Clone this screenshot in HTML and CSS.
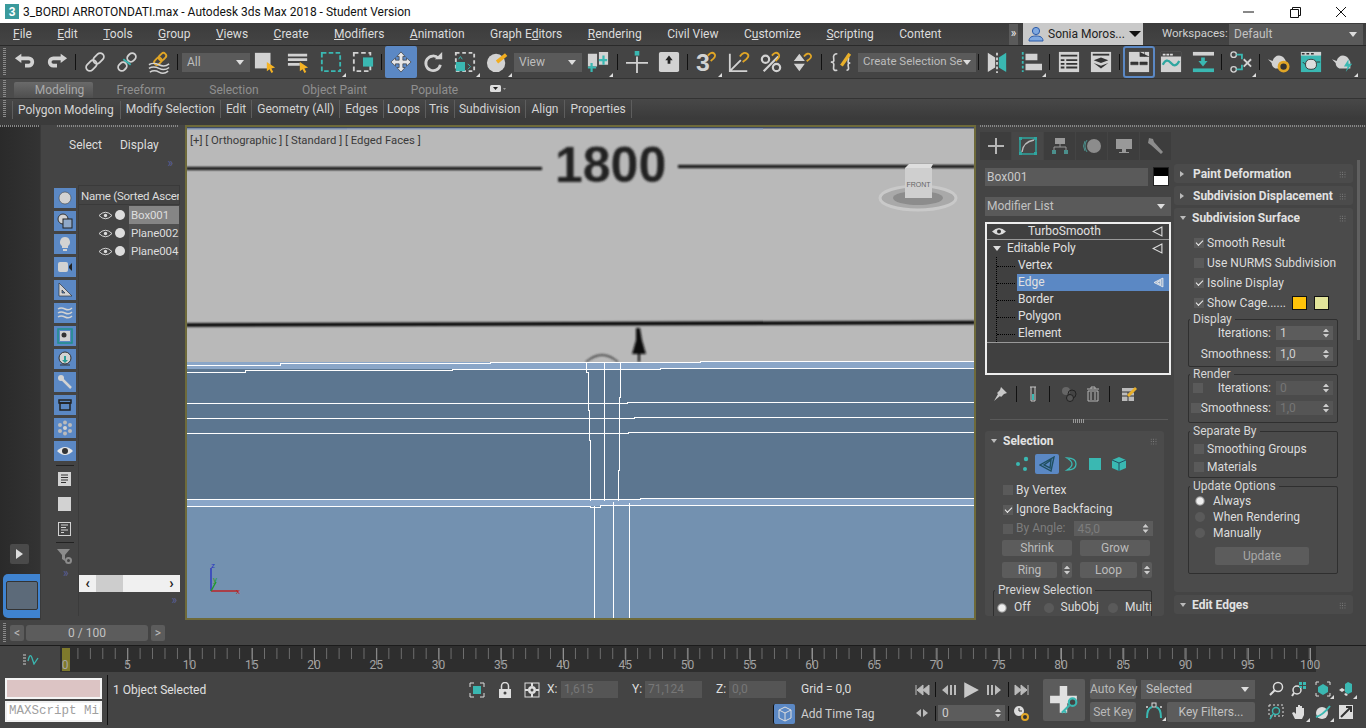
FILE: index.html
```html
<!DOCTYPE html>
<html lang="en">
<head>
<meta charset="utf-8">
<title>3ds Max</title>
<link rel="stylesheet" href="styles.css">
</head>
<body>
<div class="app">

<header class="titlebar">
  <svg class="appicon" viewBox="0 0 14 16"><rect width="14" height="15" fill="#3a9a9c"/><text x="7" y="12" class="appicon-t">3</text></svg>
  <span class="title">3_BORDI ARROTONDATI.max - Autodesk 3ds Max 2018 - Student Version</span>
  <div class="winbtns">
    <svg class="wb" viewBox="0 0 46 22"><path d="M17 11h11" stroke="#111" fill="none"/></svg>
    <svg class="wb" viewBox="0 0 46 22"><path d="M18.500 8.500h8v8h-8zM20.500 8.500v-2h8v8h-2" stroke="#111" fill="none"/></svg>
    <svg class="wb" viewBox="0 0 46 22"><path d="M18 6l10 10M28 6L18 16" stroke="#111" fill="none"/></svg>
  </div>
</header>

<nav class="menubar">
  <div class="menus">
    <span><u>F</u>ile</span><span><u>E</u>dit</span><span><u>T</u>ools</span><span><u>G</u>roup</span><span><u>V</u>iews</span><span><u>C</u>reate</span><span><u>M</u>odifiers</span><span><u>A</u>nimation</span><span>Graph E<u>d</u>itors</span><span><u>R</u>endering</span><span>Civil View</span><span>C<u>u</u>stomize</span><span><u>S</u>cripting</span><span>Content</span>
  </div>
  <div class="menu-right">
    <span class="chev">&raquo;</span>
    <div class="user">
      <svg class="s16" viewBox="0 0 16 16"><circle cx="8" cy="5" r="3.600" fill="#7fa8e0" stroke="#2a5aa8"/><path d="M1 15c0-4 3-5 7-5s7 1 7 5z" fill="#7fa8e0" stroke="#2a5aa8"/></svg>
      <span>Sonia Moros...</span><i class="tri-d dark"></i>
    </div>
    <span class="ws-label">Workspaces:</span>
    <div class="dd ws"><span>Default</span><i class="tri-d"></i></div>
  </div>
</nav>

<div class="toolbar">
  <span class="grip"></span>
  <button class="tb"><svg class="i" viewBox="0 0 24 24"><path fill="#d2d2d2" d="M1 8l7-5v3h8a6 6 0 0 1 0 12h-4v-4h4a2 2 0 0 0 0-4H8v3z"/></svg></button>
  <button class="tb"><svg class="i" viewBox="0 0 24 24"><path fill="#d2d2d2" d="M23 8l-7-5v3H8a6 6 0 0 0 0 12h4v-4H8a2 2 0 0 1 0-4h8v3z"/></svg></button>
  <i class="sep"></i>
  <button class="tb"><svg class="i" viewBox="0 0 24 24"><g transform="rotate(-45 12 12)" fill="none" stroke="#d2d2d2" stroke-width="2"><rect x="0" y="8" width="13" height="8" rx="4"/><rect x="11" y="8" width="13" height="8" rx="4"/></g></svg></button>
  <button class="tb"><svg class="i" viewBox="0 0 24 24"><g transform="rotate(-45 12 12)" fill="none" stroke="#d2d2d2" stroke-width="2"><rect x="0" y="8" width="10" height="8" rx="4"/><rect x="14" y="8" width="10" height="8" rx="4"/></g><path d="M8 9l8 6" stroke="#3ab8b2" stroke-width="2"/></svg></button>
  <button class="tb"><svg class="i" viewBox="0 0 24 24"><g transform="rotate(-45 14 8)" fill="none" stroke="#e0a526" stroke-width="2"><rect x="5" y="5" width="9" height="6" rx="3"/><rect x="12" y="5" width="9" height="6" rx="3"/></g><path d="M1 15q5-3 11 0t11-1M1 19q5-3 11 0t11-1M2 23q5-3 10 0t10-1" stroke="#d2d2d2" fill="none" stroke-width="1.600"/></svg></button>
  <i class="sep"></i>
  <div class="dd all"><span>All</span><i class="tri-d"></i></div>
  <button class="tb"><svg class="i" viewBox="0 0 24 24"><rect x="1" y="2" width="17" height="17" fill="#d2d2d2"/><path d="M14 12l9 6-4 1 2 4-2 1-2-4-3 2z" fill="#f5b324"/></svg></button>
  <button class="tb ml1"><svg class="i" viewBox="0 0 24 24"><path d="M1 3h21v3H1zM1 8h21v3H1zM1 13h13v3H1z" fill="#d2d2d2"/><path d="M14 12l9 6-4 1 2 4-2 1-2-4-3 2z" fill="#f5b324"/></svg></button>
  <button class="tb fly ml1"><svg class="i" viewBox="0 0 24 24"><rect x="2" y="2" width="20" height="20" fill="none" stroke="#3ab8b2" stroke-width="2" stroke-dasharray="5 2.500"/></svg></button>
  <button class="tb"><svg class="i" viewBox="0 0 24 24"><rect x="2" y="2" width="18" height="20" fill="none" stroke="#d2d2d2" stroke-width="2" stroke-dasharray="5 3"/><rect x="12" y="7" width="11" height="10" fill="#3ab8b2"/></svg></button>
  <i class="sep"></i>
  <button class="tb on"><svg class="i" viewBox="0 0 24 24"><path fill="#e6e6e6" stroke="#333" stroke-width=".7" d="M12 1l4.500 5H14v4h4V7.500l5 4.500-5 4.500V14h-4v4h2.500L12 23l-4.500-5H10v-4H6v2.500L1 12l5-4.500V10h4V6H7.500z"/></svg></button>
  <button class="tb"><svg class="i" viewBox="0 0 24 24"><path d="M18 8a8 8 0 1 0 2 7" fill="none" stroke="#d2d2d2" stroke-width="3"/><path d="M14 9h8V1z" fill="#d2d2d2"/></svg></button>
  <button class="tb fly"><svg class="i" viewBox="0 0 24 24"><rect x="2" y="2" width="20" height="20" fill="none" stroke="#d2d2d2" stroke-width="2" stroke-dasharray="4 3"/><rect x="2" y="12" width="10" height="10" fill="#3ab8b2"/><path d="M5 9l2-3 2 3" fill="none" stroke="#3ab8b2"/><path d="M15 14l3 3-3 3" fill="none" stroke="#3ab8b2"/></svg></button>
  <button class="tb fly"><svg class="i" viewBox="0 0 24 24"><circle cx="11" cy="13" r="10" fill="#d2d2d2"/><path d="M12 12L22 4" stroke="#f2ad1f" stroke-width="4"/></svg></button>
  <div class="dd view"><span>View</span><i class="tri-d"></i></div>
  <button class="tb fly"><svg class="i" viewBox="0 0 24 24"><path d="M1 3h10v14H1zM13 1h10v14H13z" fill="#d2d2d2"/><path d="M5 13v10M1 18h9M18 5v10M13 10h9" stroke="#3ab8b2" stroke-width="2.400"/></svg></button>
  <i class="sep ml1"></i>
  <button class="tb"><svg class="i" viewBox="0 0 24 24"><path d="M12 6v18M0 13h24" stroke="#d2d2d2" stroke-width="2"/><rect x="9.500" y="0" width="5" height="5" fill="#3ab8b2"/></svg></button>
  <button class="tb"><svg class="i" viewBox="0 0 24 24"><rect x="1" y="1" width="22" height="22" rx="2" fill="#d2d2d2"/><path d="M12 5l4 5h-2.500v4h-3v-4H8z" fill="#222"/></svg></button>
  <i class="sep"></i>
  <button class="tb fly"><svg class="i" viewBox="0 0 24 24"><text x="0" y="22" class="glyph">3</text><path d="M13 5q4-5 7-2t-4 8" fill="none" stroke="#e0a526" stroke-width="2"/></svg></button>
  <button class="tb"><svg class="i" viewBox="0 0 24 24"><path d="M2 3v19h19M2 22l12-12" fill="none" stroke="#d2d2d2" stroke-width="2"/><path d="M13 6q4-6 8-3t-5 9" fill="none" stroke="#e0a526" stroke-width="2"/></svg></button>
  <button class="tb"><svg class="i" viewBox="0 0 24 24"><circle cx="6" cy="9" r="4" fill="none" stroke="#d2d2d2" stroke-width="2.400"/><circle cx="18" cy="18" r="4" fill="none" stroke="#d2d2d2" stroke-width="2.400"/><path d="M4 22L20 6" stroke="#d2d2d2" stroke-width="2.400"/><path d="M13 5q4-5 7-2t-3 8" fill="none" stroke="#e0a526" stroke-width="2"/></svg></button>
  <button class="tb"><svg class="i" viewBox="0 0 24 24"><path d="M2 11l6-8 6 8zM2 14h12l-6 8z" fill="#d2d2d2"/><path d="M13 6q4-5 7-2t-4 7" fill="none" stroke="#e0a526" stroke-width="2"/></svg></button>
  <i class="sep"></i>
  <button class="tb"><svg class="i" viewBox="0 0 24 24"><path d="M8 3Q3 3 4 8t-3 4q4 0 3 5t4 4M18 6q3 0 2 4t2 3q-3 0-2 4t-2 4" fill="none" stroke="#d2d2d2" stroke-width="1.800"/><path d="M11 15L20 2l3 2-9 13z" fill="#e9b02a"/></svg></button>
  <div class="dd csel"><span>Create Selection Se</span><i class="tri-d"></i></div>
  <i class="sep"></i>
  <button class="tb mirror"><svg class="i" viewBox="0 0 24 24"><path d="M2 2l8 5v11l-8 5z" fill="#d2d2d2"/><path d="M12 2v22" stroke="#d2d2d2" stroke-dasharray="3 2" stroke-width="2"/><path d="M22 2l-8 5v11l8 5z" fill="#3ab8b2"/></svg></button>
  <button class="tb fly ml2"><svg class="i" viewBox="0 0 24 24"><path d="M3 1v22" stroke="#3ab8b2" stroke-width="2" stroke-dasharray="3 2"/><path d="M6 3h13v7H6zM6 14h18v7H6z" fill="#d2d2d2"/></svg></button>
  <i class="sep"></i>
  <button class="tb"><svg class="i" viewBox="0 0 24 24"><rect x="1" y="1" width="22" height="22" fill="#d2d2d2"/><path d="M3 4h18v2H3zM3 9h4v2H3zM9 9h12v2H9zM3 13h4v2H3zM9 13h12v2H9zM3 17h4v2H3zM9 17h12v2H9z" fill="#333"/></svg></button>
  <button class="tb"><svg class="i" viewBox="0 0 24 24"><rect x="1" y="1" width="22" height="22" fill="#d2d2d2"/><path d="M3 3h18v2H3z" fill="#333"/><path d="M12 7l8 3-8 3-8-3zM4 13l8 3 8-3-8 6z" fill="#333"/></svg></button>
  <i class="sep"></i>
  <button class="tb onl"><svg class="i" viewBox="0 0 24 24"><rect x="1" y="1" width="22" height="22" fill="#d2d2d2"/><path d="M13 1v5h10M18 1v5M3 12h8v3H3zM13 12h8v3h-8z" stroke="#333" fill="#333" stroke-width=".6"/></svg></button>
  <button class="tb"><svg class="i" viewBox="0 0 24 24"><rect x="1" y="1" width="22" height="22" fill="#d2d2d2"/><path d="M1 1h22v5H1z" fill="#444"/><path d="M3 3h3v2H3zM7 3h3v2H7zM11 3h3v2h-3z" fill="#ddd"/><path d="M3 15q4-8 9-2t9-2" stroke="#2fa6a0" stroke-width="2.500" fill="none"/></svg></button>
  <button class="tb"><svg class="i" viewBox="0 0 24 24"><path d="M1 1h23v4H1z" fill="#d2d2d2"/><path d="M1 19h23v4H1z" fill="#3ab8b2"/><path d="M10 7h4v4h3l-5 6-5-6h3z" fill="#3ab8b2"/></svg></button>
  <i class="sep"></i>
  <button class="tb fly"><svg class="i" viewBox="0 0 24 24"><circle cx="4" cy="4" r="3" fill="none" stroke="#d2d2d2" stroke-width="1.500"/><circle cx="4" cy="20" r="3" fill="none" stroke="#d2d2d2" stroke-width="1.500"/><path d="M7 4h6v5M7 20h6v-5" stroke="#3ab8b2" stroke-width="2" fill="none"/><path d="M15 9l8 8M23 9l-8 8" stroke="#d2d2d2" stroke-width="2"/></svg></button>
  <i class="sep"></i>
  <button class="tb"><svg class="i" viewBox="0 0 24 24"><path d="M0 9l5 2q2-6 7-6t8 7v7H8q-4-2-4-6z" fill="#d2d2d2"/><circle cx="17" cy="17" r="5" fill="#333" stroke="#e0a526" stroke-width="3"/></svg></button>
  <button class="tb"><svg class="i" viewBox="0 0 24 24"><rect x="1" y="1" width="22" height="22" fill="#3ab8b2"/><path d="M1 1h22v4H1z" fill="#d2d2d2"/><path d="M2 3h3M7 3h3M12 3h3" stroke="#333" stroke-width="1.500"/><path d="M6 15q0-6 6-6t6 6q0 5-6 5t-6-5zM3 12l3 3M18 12h4" fill="#ddd" stroke="#333"/></svg></button>
  <button class="tb fly"><svg class="i" viewBox="0 0 24 24"><path d="M0 9l5 2q2-6 7-6t8 7v7H8q-4-2-4-6z" fill="#d2d2d2"/><path d="M18 9l-5 8h4l-2 6 7-9h-4z" fill="#3ab8b2"/></svg></button>
</div>

<div class="ribbon-tabs">
  <span class="grip short"></span>
  <span class="rtab active">Modeling</span><span class="rtab w92 s2">Freeform</span><span class="rtab w92 s1">Selection</span><span class="rtab w109">Object Paint</span><span class="rtab w85 s3">Populate</span>
  <svg class="rdrop" viewBox="0 0 16 8"><rect x="0" y="0" width="11" height="7" rx="1.500" fill="#ddd"/><path d="M3 2h5L5.500 5z" fill="#222"/><path d="M13 3h3l-1.500 2z" fill="#999"/></svg>
</div>

<div class="ribbon-panels">
  <span class="grip short"></span>
  <span class="rp first">Polygon Modeling</span><span class="rp">Modify Selection</span><span class="rp">Edit</span><span class="rp">Geometry (All)</span><span class="rp">Edges</span><span class="rp t2">Loops</span><span class="rp t2">Tris</span><span class="rp t1">Subdivision</span><span class="rp">Align</span><span class="rp p1">Properties</span>
</div>
<div class="dotted-strip"></div>

<main class="main">
  <aside class="dock">
    <button class="playbtn"><i class="tri-r"></i></button>
    <div class="vpthumb"><div class="vpthumb-in"></div></div>
  </aside>

  <aside class="explorer">
    <div class="ex-tabs"><span>Select</span><span>Display</span></div>
    <div class="ex-more top">&raquo;</div>
    <div class="ex-body">
      <div class="ex-icons">
        <span class="fb"><svg class="s16" viewBox="0 0 16 16"><circle cx="8" cy="8" r="6" fill="#d2d2d2" stroke="#444" stroke-width=".6"/></svg></span>
        <span class="fb"><svg class="s16" viewBox="0 0 16 16"><circle cx="6" cy="6" r="5" fill="#d2d2d2" stroke="#333"/><rect x="6" y="6" width="9" height="9" fill="#8fa8c8" stroke="#222"/></svg></span>
        <span class="fb"><svg class="s16" viewBox="0 0 16 16"><path d="M8 1a5 5 0 0 1 3 9v2H5v-2a5 5 0 0 1 3-9zM6 13h4v2H6z" fill="#d2d2d2"/></svg></span>
        <span class="fb"><svg class="s16" viewBox="0 0 16 16"><rect x="1" y="3" width="10" height="10" rx="2" fill="#d2d2d2"/><path d="M12 7l3-3v8l-3-3z" fill="#222"/></svg></span>
        <span class="fb"><svg class="s16" viewBox="0 0 16 16"><path d="M2 1l13 13H2zM5 8v3h3z" fill="#d2d2d2" stroke="#222" stroke-width=".6" fill-rule="evenodd"/></svg></span>
        <span class="fb"><svg class="s16" viewBox="0 0 16 16"><path d="M1 4q3-2 7 0t7-1M1 8q3-2 7 0t7-1M1 12q3-2 7 0t7-1" stroke="#d2d2d2" stroke-width="1.500" fill="none"/></svg></span>
        <span class="fb"><svg class="s16" viewBox="0 0 16 16"><rect x="1" y="1" width="14" height="14" fill="none" stroke="#1f8f8a" stroke-width="1.500"/><rect x="3" y="3" width="10" height="10" fill="#d2d2d2"/><circle cx="7" cy="7" r="2.500" fill="#333"/></svg></span>
        <span class="fb"><svg class="s16" viewBox="0 0 16 16"><circle cx="8" cy="7" r="6" fill="#d2d2d2" stroke="#333"/><path d="M7 5h2v4h2l-3 3-3-3h2z" fill="#2a9c96"/><path d="M3 14h10" stroke="#333"/></svg></span>
        <span class="fb"><svg class="s16" viewBox="0 0 16 16"><circle cx="4" cy="4" r="3" fill="#d2d2d2"/><path d="M5 5l9 9" stroke="#d2d2d2" stroke-width="2.500"/></svg></span>
        <span class="fb"><svg class="s16" viewBox="0 0 16 16"><path d="M2 3h12v3H2z" fill="none" stroke="#222" stroke-width="1.500"/><path d="M3 6h10v7H3z" fill="none" stroke="#222" stroke-width="1.500"/></svg></span>
        <span class="fb"><svg class="s16" viewBox="0 0 16 16"><circle cx="8" cy="8" r="2" fill="#d2d2d2"/><g fill="#bbb"><circle cx="8" cy="2.500" r="2"/><circle cx="8" cy="13.500" r="2"/><circle cx="3" cy="5" r="2"/><circle cx="13" cy="5" r="2"/><circle cx="3" cy="11" r="2"/><circle cx="13" cy="11" r="2"/></g></svg></span>
        <span class="fb"><svg class="s16" viewBox="0 0 16 16"><path d="M0 8q8-8 16 0q-8 8-16 0z" fill="#e6e6e6"/><circle cx="8" cy="8" r="3" fill="#333"/></svg></span>
        <i class="ex-div"></i>
        <svg class="ex-small" viewBox="0 0 14 14"><rect width="13" height="14" fill="#d2d2d2"/><path d="M3 3h7M3 5.500h7M3 8h7M3 10.500h5" stroke="#333"/></svg>
        <svg class="ex-small" viewBox="0 0 14 14"><rect width="13" height="14" fill="#d2d2d2"/></svg>
        <svg class="ex-small" viewBox="0 0 14 14"><rect x=".5" y=".5" width="12" height="13" fill="none" stroke="#d2d2d2"/><path d="M3 3h7M3 5.500h5M3 8h7M3 10.500h3" stroke="#d2d2d2"/></svg>
        <i class="ex-div"></i>
        <svg class="ex-filter" viewBox="0 0 16 16"><path d="M0 0h13L8 6v6L5 10V6z" fill="#8c8c8c"/><circle cx="11.500" cy="11.500" r="2.500" fill="none" stroke="#8c8c8c" stroke-width="2"/></svg>
      </div>
      <div class="ex-list">
        <div class="ex-head">Name (Sorted Ascen</div>
        <div class="ex-tree">
          <div class="ex-row"><svg class="eye" viewBox="0 0 14 9"><path d="M0 4.500q7-7 14 0q-7 7-14 0z" fill="none" stroke="#ddd"/><circle cx="7" cy="4.500" r="1.800" fill="#ddd"/></svg><i class="dot"></i><span class="cell sel">Box001</span></div>
          <div class="ex-row"><svg class="eye" viewBox="0 0 14 9"><path d="M0 4.500q7-7 14 0q-7 7-14 0z" fill="none" stroke="#ddd"/><circle cx="7" cy="4.500" r="1.800" fill="#ddd"/></svg><i class="dot"></i><span class="cell">Plane002</span></div>
          <div class="ex-row"><svg class="eye" viewBox="0 0 14 9"><path d="M0 4.500q7-7 14 0q-7 7-14 0z" fill="none" stroke="#ddd"/><circle cx="7" cy="4.500" r="1.800" fill="#ddd"/></svg><i class="dot"></i><span class="cell">Plane004</span></div>
        </div>
        <div class="hscroll"><i class="ar">&lsaquo;</i><span class="thumb"></span><i class="ar">&rsaquo;</i></div>
      </div>
    </div>
    <div class="ex-more m1">&raquo;</div>
    <div class="ex-more m2b">&raquo;</div>
  </aside>

  <section class="viewport">
    <svg class="scene" viewBox="187 127 787 491" preserveAspectRatio="none">
      <defs><filter id="soft"><feGaussianBlur stdDeviation=".8"/></filter></defs>
      <rect x="187" y="127" width="787" height="491" fill="#b9b9b9"/>
      <rect x="187" y="127" width="787" height="1.500" fill="#3c4a66"/>
      <rect x="187" y="128.500" width="160" height="1" fill="#7c95c0"/>
      <rect x="347" y="128.500" width="416" height="1" fill="#8aa0c6"/>
      <g filter="url(#soft)">
        <path d="M186 168.500H542" stroke="#0d0d0d" stroke-width="2.800"/>
        <path d="M678 166.500H975" stroke="#0d0d0d" stroke-width="2.800"/>
        <text x="555" y="182" class="dim">1800</text>
        <path d="M186 325L975 322.500" stroke="#000" stroke-width="3.600"/>
        <path d="M636 328h4l2 12 4 14h-6v8h-2v-8h-6l4-14z" fill="#111"/>
        <path d="M586 362q16-14 32 0" fill="none" stroke="#333" stroke-width="1.500"/>
      </g>
      <rect x="187" y="362" width="787" height="8" fill="#8aa6c8"/>
      <rect x="187" y="369" width="787" height="130" fill="#5c7690"/>
      <rect x="187" y="499" width="787" height="7" fill="#8aa6c8"/>
      <rect x="187" y="506" width="787" height="112" fill="#7391b0"/>
      <g stroke="#fff" fill="none" stroke-width="1" class="crisp">
        <path d="M187 365.500H280V363.500H490V362.500H700V361.500H975"/>
        <path d="M187 372.500H245V370.500H452V369.500H660V368.500H975"/>
        <path d="M187 403.500H627V402.500H975"/>
        <path d="M187 418.500H634V417.500H975"/>
        <path d="M187 433.500H628V432.500H975"/>
        <path d="M187 499.500H640V498.500H975"/>
        <path d="M187 506.500H590V507.500H600V505.500H975"/>
        <path d="M586.500 362V372H588.500V410H589.500V440H590.500V501"/>
        <path d="M604.500 362V501"/>
        <path d="M620.500 362V397H619.500V470H618.500V501"/>
        <path d="M594.500 506V618"/>
        <path d="M613.500 502V618"/>
        <path d="M629.500 503V618"/>
      </g>
      <g class="cube">
        <ellipse cx="918" cy="198" rx="38" ry="12" fill="#a9a9a9" stroke="#c9c9c9" stroke-width="3"/>
        <ellipse cx="918" cy="198" rx="25" ry="7" fill="#8c8c8c"/>
        <path d="M905 168l4-4h24l-2 4z" fill="#dedede"/>
        <rect x="905" y="168" width="27" height="30" fill="#cfcfcf"/>
        <text x="918.500" y="187" class="cube-t">FRONT</text>
      </g>
      <g stroke-width="1.400" fill="none">
        <path d="M211 591V568" stroke="#2a36c0"/>
        <path d="M211 591H238" stroke="#c01c1c"/>
        <path d="M211 591L216 582" stroke="#1f9a2a"/>
      </g>
      <text x="211" y="568" class="ax z">z</text>
      <text x="236" y="594" class="ax x">x</text>
      <text x="213" y="582" class="ax y">y</text>
    </svg>
    <div class="vplabel">[+] [ Orthographic ] [ Standard ] [ Edged Faces ]</div>
  </section>

  <aside class="cmd">
    <div class="cmd-left">
      <div class="cmd-tabs">
        <span class="ct"><svg class="s20" viewBox="0 0 20 20"><path d="M10 2v16M2 10h16" stroke="#b5b5b5" stroke-width="2"/></svg></span>
        <span class="ct act"><svg class="s20" viewBox="0 0 20 20"><rect x="2" y="2" width="16" height="16" fill="none" stroke="#2fa6a0" stroke-width="1.500"/><path d="M4 16q1-10 12-12" fill="none" stroke="#bbb" stroke-width="1.500"/><path d="M1 1h3v3H1zM16 1h3v3h-3zM1 16h3v3H1zM16 16h3v3h-3z" fill="#2fa6a0"/></svg></span>
        <span class="ct"><svg class="s20" viewBox="0 0 20 20"><path d="M5 2h10v6H5z" fill="#999"/><path d="M10 8v3M4 15v-4h12v4" stroke="#999" fill="none"/><path d="M2 14h4v4H2zM14 14h4v4h-4z" fill="#4b8f8c"/></svg></span>
        <span class="ct"><svg class="s20" viewBox="0 0 20 20"><circle cx="12" cy="10" r="7" fill="#8c8c8c"/><path d="M5 4q-4 6 0 12M3 5q-3 5 0 10" stroke="#4b8f8c" fill="none"/></svg></span>
        <span class="ct"><svg class="s20" viewBox="0 0 20 20"><path d="M2 3h16v10H2zM8 13h4v3h3v1H5v-1h3z" fill="#999"/></svg></span>
        <span class="ct"><svg class="s20" viewBox="0 0 20 20"><path d="M3 2l4 1 1 3 9 10-2 2L5 9 2 7z" fill="#8c8c8c"/></svg></span>
      </div>
      <div class="name-row"><div class="field">Box001</div><div class="swatch"></div></div>
      <div class="dd modlist"><span>Modifier List</span><i class="tri-d"></i></div>
      <div class="stack">
        <div class="st-row st-top"><svg class="eye2" viewBox="0 0 14 9"><path d="M0 4.500q7-7 14 0q-7 7-14 0z" fill="#ddd"/><circle cx="7" cy="4.500" r="2" fill="#333"/></svg><span class="st-turbo">TurboSmooth</span><svg class="lit" viewBox="0 0 10 10"><path d="M9 1L1 5l8 4z" fill="none" stroke="#ddd"/></svg></div>
        <div class="st-row"><i class="tri-d expand"></i><span class="st-name">Editable Poly</span><svg class="lit" viewBox="0 0 10 10"><path d="M9 1L1 5l8 4z" fill="none" stroke="#ddd"/></svg></div>
        <div class="st-tree">
          <div class="st-sub"><span>Vertex</span></div>
          <div class="st-sub cur"><span>Edge</span><svg class="lit" viewBox="0 0 10 10"><path d="M9 1L1 5l8 4zM7 3L3.500 5 7 7z" fill="#8fa8c8" stroke="#eee" stroke-width=".8"/></svg></div>
          <div class="st-sub"><span>Border</span></div>
          <div class="st-sub"><span>Polygon</span></div>
          <div class="st-sub"><span>Element</span></div>
        </div>
        <div class="st-end"></div>
      </div>
      <div class="stack-tools">
        <svg class="s16" viewBox="0 0 16 16"><path d="M9 1l6 6-3 1-3 3-1-1-6 5 4-7-1-1 3-3z" fill="#c8c8c8"/></svg>
        <i class="sep"></i>
        <svg class="s16" viewBox="0 0 16 16"><path d="M5 1h6M6 1v14h4V1" stroke="#c8c8c8" fill="none"/><rect x="7" y="8" width="2" height="6" fill="#3ab8b2"/></svg>
        <i class="sep"></i>
        <svg class="s16 nudge3" viewBox="0 0 16 16"><circle cx="5" cy="5" r="4" fill="#666"/><circle cx="11" cy="8" r="4" fill="none" stroke="#222"/><circle cx="9" cy="12" r="3.500" fill="#555" stroke="#222"/></svg>
        <svg class="s16 nudge8" viewBox="0 0 16 16"><path d="M2 3h12M6 3V1h4v2M3 5h10v10H3zM6 6v8M10 6v8" stroke="#b5b5b5" fill="none"/></svg>
        <i class="sep"></i>
        <svg class="s16 nudge3" viewBox="0 0 16 16"><rect x="1" y="2" width="12" height="13" fill="#bbb"/><path d="M1 6h12M7 6v9M1 10h12" stroke="#333"/><path d="M6 9l8-8 2 2-8 8z" fill="#e9b02a"/></svg>
      </div>
      <div class="divider"><i></i></div>

      <div class="roll sel-roll">
        <div class="roll-h"><i class="tri-d small"></i><b>Selection</b><span class="dots"></span></div>
        <div class="sub-icons">
          <span class="so"><svg class="s16" viewBox="0 0 16 16"><g fill="#3ab8b2"><circle cx="3" cy="8" r="2"/><circle cx="11" cy="3" r="2.200"/><circle cx="10" cy="13" r="2"/></g></svg></span>
          <span class="so on"><svg class="s16" viewBox="0 0 16 16"><path d="M15 1L1 9l11 6zM12 4L5 9l6 3z" fill="none" stroke="#1f4f60" stroke-width="1.400"/></svg></span>
          <span class="so"><svg class="s16" viewBox="0 0 16 16"><path d="M4 2q9 0 9 6t-9 6q5-3 5-6t-5-6z" fill="none" stroke="#3ab8b2" stroke-width="1.300"/></svg></span>
          <span class="so"><svg class="s16" viewBox="0 0 16 16"><rect x="2" y="2" width="12" height="12" fill="#3ab8b2"/></svg></span>
          <span class="so"><svg class="s16" viewBox="0 0 16 16"><path d="M8 1l7 3v8l-7 3-7-3V4z" fill="#3ab8b2"/><path d="M1 4l7 3 7-3M8 7v8" stroke="#1f4f60" fill="none"/></svg></span>
        </div>
        <label class="ck r1"><i class="box"></i>By Vertex</label>
        <label class="ck r2"><i class="box on"></i>Ignore Backfacing</label>
        <div class="ck r2 dim-t"><i class="box"></i>By Angle:<div class="spin sp-angle"><span>45,0</span><i class="updn"></i></div></div>
        <div class="btn-row mt3"><span class="btn w70">Shrink</span><span class="btn w70">Grow</span></div>
        <div class="btn-row mt6"><span class="btn w55">Ring</span><i class="updn-b"></i><span class="btn w57">Loop</span><i class="updn-b"></i></div>
        <fieldset class="grp prev">
          <legend>Preview Selection</legend>
          <div class="radios"><i class="rad on"></i><span>Off</span><i class="rad"></i><span class="so2">SubObj</span><i class="rad"></i><span>Multi</span></div>
        </fieldset>
      </div>
    </div>

    <div class="cmd-right">
      <div class="roll r-h"><div class="roll-h"><i class="tri-r small"></i><b>Paint Deformation</b><span class="dots"></span></div></div>
      <div class="roll r-h"><div class="roll-h"><i class="tri-r small"></i><b>Subdivision Displacement</b><span class="dots"></span></div></div>
      <div class="roll r-s">
        <div class="roll-h"><i class="tri-d small"></i><b>Subdivision Surface</b><span class="dots"></span></div>
        <div class="rs-body">
          <label class="ck h20"><i class="box on"></i>Smooth Result</label>
          <label class="ck h20"><i class="box"></i>Use NURMS Subdivision</label>
          <label class="ck h20"><i class="box on"></i>Isoline Display</label>
          <label class="ck h20"><i class="box on"></i>Show Cage......<i class="cage y"></i><i class="cage g"></i></label>
          <fieldset class="grp g55">
            <legend>Display</legend>
            <div class="sp-row"><span>Iterations:</span><div class="spin"><span>1</span><i class="updn"></i></div></div>
            <div class="sp-row gap7"><span>Smoothness:</span><div class="spin"><span>1,0</span><i class="updn"></i></div></div>
          </fieldset>
          <fieldset class="grp g56 dim-g">
            <legend>Render</legend>
            <div class="sp-row"><i class="box lead"></i><span>Iterations:</span><div class="spin off"><span>0</span><i class="updn"></i></div></div>
            <div class="sp-row gap6"><i class="box lead"></i><span>Smoothness:</span><div class="spin off"><span>1,0</span><i class="updn"></i></div></div>
          </fieldset>
          <fieldset class="grp g54">
            <legend>Separate By</legend>
            <label class="ck h18 first"><i class="box"></i>Smoothing Groups</label>
            <label class="ck h18"><i class="box"></i>Materials</label>
          </fieldset>
          <fieldset class="grp g95">
            <legend>Update Options</legend>
            <label class="rd"><i class="rad on"></i>Always</label>
            <label class="rd"><i class="rad"></i>When Rendering</label>
            <label class="rd"><i class="rad"></i>Manually</label>
            <span class="btn update">Update</span>
          </fieldset>
        </div>
      </div>
      <div class="roll r-h"><div class="roll-h"><i class="tri-d small"></i><b>Edit Edges</b><span class="dots"></span></div></div>
    </div>
    <div class="cmd-scroll"><i></i></div>
  </aside>
</main>

<div class="slider">
  <span class="grip tiny"></span>
  <span class="sl-btn">&lt;</span><span class="sl-track">0 / 100</span><span class="sl-btn">&gt;</span>
</div>

<div class="track">
  <svg class="curve" viewBox="0 0 16 12"><path d="M0 2h3M0 5h3M0 8h3M0 11h3" stroke="#ccc"/><path d="M5 8q2-9 4-3t2 6 4-6" stroke="#3ab8b2" fill="none" stroke-width="1.300"/></svg>
  <div class="ruler">
    <i class="marker"></i>
    <div class="labels"><span>0</span><span>5</span><span>10</span><span>15</span><span>20</span><span>25</span><span>30</span><span>35</span><span>40</span><span>45</span><span>50</span><span>55</span><span>60</span><span>65</span><span>70</span><span>75</span><span>80</span><span>85</span><span>90</span><span>95</span><span>100</span></div>
  </div>
</div>

<footer class="bottom">
  <div class="mini"><div class="mini-a"></div><div class="mini-b">MAXScript Mini</div></div>
  <i class="vsep"></i>
  <div class="status">1 Object Selected</div>
  <div class="coords">
    <div class="co-row">
      <svg class="co-i" viewBox="0 0 16 16"><path d="M1 5V1h4M11 1h4v4M15 11v4h-4M5 15H1v-4" fill="none" stroke="#ddd"/><rect x="4" y="4" width="8" height="8" fill="#3ab8b2"/></svg>
      <svg class="co-i ml6" viewBox="0 0 16 16"><path d="M2 7h12v9H2z" fill="#ddd"/><path d="M4.500 7V4a3.500 3.500 0 0 1 7 0v3" fill="none" stroke="#ddd" stroke-width="1.500"/><circle cx="8" cy="11" r="1.500" fill="#444"/></svg>
      <svg class="co-i ml5" viewBox="0 0 16 16"><rect x="1" y="1" width="14" height="14" fill="none" stroke="#ddd"/><circle cx="8" cy="8" r="4" fill="#ddd"/><circle cx="8" cy="8" r="1.500" fill="#444"/><path d="M8 1v3M8 12v3M1 8h3M12 8h3" stroke="#ddd" stroke-width="2"/></svg>
      <b class="axis a-x">X:</b><span class="co-f">1,615</span>
      <b class="axis a-y">Y:</b><span class="co-f">71,124</span>
      <b class="axis a-z">Z:</b><span class="co-f">0,0</span>
      <span class="grid-t">Grid = 0,0</span>
    </div>
    <div class="tag-row">
      <span class="tag-i"><svg class="s16" viewBox="0 0 16 16"><path d="M8 1l6 3v8l-6 3-6-3V4z" fill="none" stroke="#ddd"/><path d="M2 4l6 3 6-3M8 7v8" fill="none" stroke="#ddd"/></svg></span>
      <span>Add Time Tag</span>
    </div>
  </div>
  <div class="play">
    <div class="pl-row">
      <svg class="pl" viewBox="0 0 16 12"><path d="M2 1v10M15 1L9 6l6 5zM9 1L3 6l6 5z" fill="#bbb" stroke="#bbb"/></svg>
      <i class="vs ml3"></i>
      <svg class="pl ml3" viewBox="0 0 16 12"><path d="M7 1L1 6l6 5zM9 1h2v10H9zM13 1h2v10h-2z" fill="#bbb"/></svg>
      <svg class="pl big" viewBox="0 0 16 16"><path d="M2 1l13 7-13 7z" fill="#c8c8c8"/></svg>
      <svg class="pl ml3" viewBox="0 0 16 12"><path d="M9 1l6 5-6 5zM1 1h2v10H1zM5 1h2v10H5z" fill="#bbb"/></svg>
      <i class="vs ml4"></i>
      <svg class="pl ml3" viewBox="0 0 16 12"><path d="M14 1v10M1 1l6 5-6 5zM7 1l6 5-6 5z" fill="#bbb" stroke="#bbb"/></svg>
    </div>
    <div class="pl-row second">
      <svg class="pl" viewBox="0 0 16 12"><path d="M7 2L2 6l5 4zM9 2l5 4-5 4z" fill="#bbb"/></svg>
      <i class="vs ml3"></i>
      <div class="spin frame"><span>0</span><i class="updn"></i></div>
      <i class="vs ml3"></i>
      <svg class="pl ml2 tall" viewBox="0 0 16 16"><circle cx="6" cy="6" r="5" fill="#ddd"/><path d="M6 3v3h3" stroke="#333" fill="none"/><circle cx="12" cy="12" r="3" fill="#333" stroke="#e0a526" stroke-width="2"/></svg>
    </div>
  </div>
  <div class="keys">
    <span class="bigkey"><svg viewBox="0 0 28 28" class="bk"><path d="M10 1h7v9h9v7h-9v9h-7v-9H1v-7h9z" fill="#e0e0e0"/><circle cx="22" cy="16" r="3.500" fill="#444" stroke="#3ab8b2" stroke-width="2"/><path d="M19 19L12 26M14 24l2 2" stroke="#3ab8b2" stroke-width="2"/></svg></span>
    <div class="key-col">
      <div class="key-row"><span class="btn kb">Auto Key</span><div class="dd kdd"><span>Selected</span><i class="tri-d"></i></div></div>
      <div class="key-row"><span class="btn kb">Set Key</span><span class="kf fly"><svg class="s20" viewBox="0 0 20 20"><rect x="8" y="1" width="4" height="4" fill="none" stroke="#ddd"/><path d="M3 16q0-10 5-11M17 16q0-10-5-11" fill="none" stroke="#3ab8b2" stroke-width="2"/><circle cx="3" cy="5" r="1" fill="#ddd"/><circle cx="17" cy="5" r="1" fill="#ddd"/></svg></span><span class="btn kfb">Key Filters...</span></div>
    </div>
  </div>
  <div class="nav">
    <span class="nv"><svg class="s16" viewBox="0 0 16 16"><circle cx="10" cy="6" r="4.500" fill="none" stroke="#ddd" stroke-width="1.500"/><path d="M7 9l-5 5" stroke="#ddd" stroke-width="2"/></svg></span>
    <span class="nv"><svg class="s16" viewBox="0 0 16 16"><circle cx="6" cy="9" r="4" fill="none" stroke="#ddd" stroke-width="1.500"/><path d="M3 12l-2 3" stroke="#ddd" stroke-width="2"/><path d="M8 1h3v3H8zM12 1h3v3h-3zM8 5h3v2H8zM12 5h3v3h-3z" fill="#3ab8b2"/></svg></span>
    <span class="nv fly"><svg class="s16" viewBox="0 0 16 16"><path d="M1 4V1h3M12 1h3v3M15 12v3h-3M4 15H1v-3" fill="none" stroke="#ddd"/><path d="M8 3l5 3v5l-5 3-5-3V6z" fill="#3ab8b2"/></svg></span>
    <span class="nv fly"><svg class="s16" viewBox="0 0 16 16"><path d="M10 1l4 2v8l-4 2-3-2V3z" fill="#3ab8b2"/><path d="M1 9l3-2 3 2-3 2zM6 13l2-1 2 2-2 1z" fill="#ddd"/></svg></span>
    <span class="nv"><svg class="s16" viewBox="0 0 16 16"><rect x="1" y="1" width="14" height="11" fill="none" stroke="#ddd" stroke-dasharray="2 2"/><circle cx="8" cy="7" r="3.500" fill="none" stroke="#3ab8b2" stroke-width="1.400"/><path d="M5 10l-3 5" stroke="#3ab8b2" stroke-width="1.500"/></svg></span>
    <span class="nv fly"><svg class="s16" viewBox="0 0 16 16"><path d="M4 15L1 9l2-1 2 2V3h2v5V1h2v7V2h2v6V4h2v7l-2 4z" fill="#ddd"/></svg></span>
    <span class="nv fly"><svg class="s16" viewBox="0 0 16 16"><circle cx="7" cy="9" r="6" fill="#ddd"/><path d="M1 13Q8 11 15 2" fill="none" stroke="#3ab8b2" stroke-width="2"/></svg></span>
    <span class="nv"><svg class="s16" viewBox="0 0 16 16"><rect x="1" y="1" width="14" height="14" fill="#ddd"/><path d="M3 13l9-9M8 3h5v5" stroke="#333" fill="none" stroke-width="2"/></svg></span>
  </div>
</footer>
</div>
</body>
</html>
```
FILE: styles.css
```css
* { box-sizing: border-box; }
html, body { margin: 0; padding: 0; }
body { font: 12px/1.2 Roboto, "Noto Sans", sans-serif; color: #d6d6d6; background: #444; }
i { font-style: normal; display: block; flex: none; }
svg { display: block; flex: none; }
button { margin: 0; padding: 0; border: 0; background: none; }
u { text-underline-offset: 1px; }
.app { width: 1366px; height: 728px; display: flex; flex-direction: column; overflow: hidden; background: #444; white-space: nowrap; }
.s16 { width: 16px; height: 16px; }
.s20 { width: 20px; height: 20px; }
.i { width: 22px; height: 22px; overflow: visible; }

.titlebar { height: 23px; background: #fff; display: flex; align-items: center; color: #111; flex: none; }
.appicon { width: 14px; height: 16px; margin-left: 5px; }
.appicon-t { font: bold 12px "Liberation Sans", sans-serif; fill: #fff; text-anchor: middle; }
.title { margin-left: 4px; padding-top: 2px; }
.winbtns { margin-left: auto; display: flex; margin-right: 2px; }
.wb { width: 46px; height: 22px; }

.menubar { height: 23px; flex: none; display: flex; align-items: center; background: linear-gradient(#3c3c3c, #444); border-bottom: 1px solid #2a2a2a; }
.menus { display: flex; gap: 25.500px; padding: 1px 0 0 13px; color: #dcdcdc; width: 1009px; }
.menu-right { display: flex; align-items: center; height: 100%; }
.chev { width: 9px; background: #5a5a5a; color: #eee; text-align: center; height: 21px; line-height: 19px; font-size: 12px; }
.user { margin-left: 5px; width: 120px; height: 22px; background: #c9c9c9; color: #222; display: flex; align-items: center; gap: 4px; padding-left: 5px; }
.ws-label { margin-left: 19px; width: 67px; color: #cfcfcf; font-size: 11.500px; }
.dd { display: flex; align-items: center; justify-content: space-between; background: #5a5a5a; color: #c2c2c2; padding: 0 6px 0 5px; flex: none; }
.ws { width: 134px; height: 21px; }
.tri-d { width: 0; height: 0; border: 4px solid transparent; border-top: 5px solid #ddd; border-bottom: 0; }
.tri-d.dark { border-top-color: #111; border-left-width: 6px; border-right-width: 6px; border-top-width: 6px; }
.tri-d.small { border-width: 4px 3px 0; border-top-color: #bbb; border-style: solid; border-left-color: transparent; border-right-color: transparent; }
.tri-r { width: 0; height: 0; border: 5px solid transparent; border-left: 7px solid #ddd; border-right: 0; }
.tri-r.small { border-width: 3px 0 3px 4px; border-left-color: #bbb; margin-right: 3px; }

.toolbar { height: 33px; flex: none; display: flex; align-items: center; background: #444; padding-left: 3px; border-bottom: 1px solid #333; }
.grip { width: 3px; height: 28px; margin-right: 3px; flex: none; background: repeating-linear-gradient(#8a8a8a 0 1px, transparent 1px 2px); }
.grip.short { height: 18px; }
.grip.tiny { height: 20px; margin-left: 3px; margin-right: 4px; }
.tb { position: relative; width: 32px; height: 32px; display: flex; align-items: center; justify-content: center; flex: none; }
.tb.on { background: #5b88c4; border-radius: 2px; }
.tb.onl { outline: 2px solid #5b88c4; outline-offset: -2px; border-radius: 3px; }
.tb.ml1 { margin-left: 1px; }
.tb.ml2 { margin-left: 2px; }
.tb.mirror { margin-left: -1px; }
.fly::after { content: ""; position: absolute; right: 1px; bottom: 1px; border: 2px solid #ddd; border-top-color: transparent; border-left-color: transparent; }
.sep { width: 1px; height: 16px; background: #111; margin: 0 3px 0 2px; flex: none; }
.sep.ml1 { margin-left: 3px; }
.all { width: 68px; height: 19px; margin: 0 -1px 0 1px; color: #bdbdbd; }
.view { width: 68px; height: 19px; margin-left: 1px; color: #bdbdbd; }
.csel { width: 118px; height: 19px; margin-left: 1px; color: #bdbdbd; font-size: 11.500px; padding-right: 5px; }

.ribbon-tabs { height: 20px; flex: none; display: flex; align-items: flex-end; background: #4b4b4b; padding-left: 3px; border-bottom: 1px solid #333; color: #8f8f8f; }
.ribbon-tabs .grip { align-self: center; }
.rtab { height: 16px; line-height: 16px; text-align: center; flex: none; }
.rtab.active { width: 79px; margin-left: 5px; padding-left: 12px; color: #a9a9a9; background: linear-gradient(#6a6a6a, #4e4e4e); border-radius: 2px 2px 0 0; }
.rtab.s2 { margin-left: 2px; }
.rtab.s1 { margin-left: 1px; }
.rtab.s3 { margin-left: 3px; }
.w92 { width: 92px; }
.w109 { width: 109px; }
.w85 { width: 85px; }
.rdrop { width: 16px; height: 8px; margin: 0 0 5px 13px; }

.ribbon-panels { height: 20px; flex: none; display: flex; align-items: center; background: linear-gradient(#484848, #3a3a3a); padding-left: 3px; }
.rp { padding: 0 5px; height: 18px; line-height: 19px; border-right: 1px solid #5d5d5d; color: #d4d4d4; flex: none; }
.rp.first { border-left: 1px solid #5d5d5d; margin-left: 3px; padding-right: 6px; }
.rp.t2 { margin-left: -2px; }
.rp.t1 { margin-left: -1px; }
.rp.p1 { margin-left: 1px; }
.dotted-strip { height: 6px; flex: none; background: #3b3b3b; }

.main { height: 495px; flex: none; display: flex; }
.dock { width: 40px; background: repeating-linear-gradient(90deg, #888 0 1px, transparent 1px 2px) 0 0 / 100% 2px no-repeat, linear-gradient(90deg, #2a2a2a, #333); display: flex; flex-direction: column; align-items: flex-end; justify-content: flex-end; padding-bottom: 2px; }
.playbtn { width: 19px; height: 20px; background: #4a4a4a; border-radius: 2px; display: flex; align-items: center; justify-content: center; margin: 0 11px 10px 0; }
.vpthumb { width: 37px; height: 44px; background: #3f83d0; border-radius: 5px 0 0 5px; padding: 7px 2px 8px 3px; }
.vpthumb-in { height: 100%; background: #5c6a79; border: 1px solid #333; border-radius: 2px; }

.explorer { position: relative; width: 145px; background: repeating-linear-gradient(90deg, #888 0 1px, transparent 1px 2px) 16px 0 / 121px 2px no-repeat, #444; flex: none; border-left: 1px solid #3a3a3a; }
.ex-tabs { display: flex; gap: 18px; padding: 13px 0 0 28px; height: 60px; color: #ddd; }
.ex-more { position: absolute; color: #5a5f9a; font-size: 12px; line-height: 12px; }
.ex-more.top { right: 12px; top: 32px; }
.ex-more.m1 { left: 22px; top: 442px; }
.ex-more.m2b { right: 8px; top: 469px; }
.ex-body { display: flex; margin-left: 13px; }
.ex-icons { width: 25px; padding-top: 3px; display: flex; flex-direction: column; gap: 3px; border-right: 1px solid #3b3b3b; align-items: center; padding-right: 3px; height: 431px; }
.fb { width: 22px; height: 20px; background: #5b88c4; display: flex; align-items: center; justify-content: center; flex: none; }
.ex-div { width: 18px; height: 1px; background: #222; margin: 1px 0 0; }
.ex-small { width: 14px; height: 14px; margin: 3px 0 2px; }
.ex-small + .ex-small { margin-top: 6px; }
.ex-filter { width: 16px; height: 16px; margin-top: 3px; }
.ex-list { width: 101px; display: flex; flex-direction: column; color: #ddd; }
.ex-head { height: 20px; line-height: 20px; padding-left: 2px; border: 1px solid #3a3a3a; border-left: 0; overflow: hidden; font-size: 11.500px; letter-spacing: -.25px; }
.ex-tree { height: 370px; padding-top: 1px; }
.ex-row { height: 18px; display: flex; align-items: center; padding-left: 20px; }
.eye { width: 13px; height: 9px; }
.dot { width: 10px; height: 10px; border-radius: 50%; background: #ddd; margin-left: 3px; }
.cell { margin-left: 4px; width: 50px; height: 18px; line-height: 18px; padding-left: 2px; background: #4f4f4f; overflow: hidden; font-size: 11.500px; letter-spacing: -.1px; }
.cell.sel { background: #858585; }
.hscroll { height: 17px; background: #f0f0f0; display: flex; align-items: center; color: #222; }
.hscroll .ar { width: 17px; text-align: center; font-size: 15px; line-height: 15px; font-weight: bold; }
.hscroll .thumb { width: 27px; height: 100%; background: #cdcdcd; margin-right: auto; }

.viewport { position: relative; width: 791px; flex: none; border: 2px solid #6e6a3a; background: #b9b9b9; }
.scene { width: 100%; height: 100%; }
.crisp { shape-rendering: crispEdges; }
.dim { font: bold 50px "Liberation Sans", sans-serif; fill: #222; }
.cube-t { font: 7px "Liberation Sans", sans-serif; fill: #666; text-anchor: middle; }
.ax { font: 8px "Liberation Sans", sans-serif; }
.ax.z { fill: #2a36c0; }
.ax.x { fill: #c01c1c; }
.ax.y { fill: #1f9a2a; }
.vplabel { position: absolute; left: 3px; top: 7px; color: #3a3a3a; font-size: 11.300px; }
.glyph { font: bold 27px "Liberation Sans", sans-serif; fill: #d2d2d2; }

.cmd { position: relative; flex: 1; display: flex; background: repeating-linear-gradient(90deg, #888 0 1px, transparent 1px 2px) 0 0 / 100% 2px no-repeat, #444; margin-left: 4px; }
.cmd-left { width: 192px; padding: 7px 0 0 5px; flex: none; overflow: hidden; }
.cmd-tabs { height: 28px; display: flex; margin-left: -5px; }
.ct { width: 32px; height: 28px; display: flex; align-items: center; justify-content: center; background: #3d3d3d; border-right: 1px solid #444; }
.ct.act { background: #474747; }
.name-row { display: flex; margin-top: 8px; align-items: flex-start; }
.field { width: 163px; height: 18px; background: #5a5a5a; color: #c9c9c9; padding-left: 2px; line-height: 18px; }
.swatch { width: 16px; height: 19px; margin: -1px 0 0 5px; background: linear-gradient(#000 0 50%, #fff 50%); border: 1px solid #222; }
.modlist { width: 186px; height: 19px; margin-top: 11px; padding-left: 2px; }
.stack { width: 186px; height: 153px; margin-top: 6px; border: 2px solid #eee; background: #404040; color: #e0e0e0; }
.st-row { height: 17px; display: flex; align-items: center; }
.st-top { border-bottom: 1px solid #999; height: 16px; padding-left: 5px; }
.eye2 { width: 14px; height: 9px; }
.st-turbo { margin-left: 22px; }
.st-name { margin-left: 6px; }
.expand { margin-left: 6px; }
.lit { width: 11px; height: 11px; margin-left: auto; margin-right: 6px; }
.st-tree { margin: 0 0 0 9px; border-left: 1px dotted #000; height: 85px; }
.st-sub { height: 17px; display: flex; align-items: center; padding-left: 21px; position: relative; }
.st-sub::before { content: ""; position: absolute; left: 0; top: 9px; width: 18px; border-top: 1px dotted #000; }
.st-sub.cur { background: linear-gradient(90deg, transparent 0 20px, #5b88c4 20px); }
.st-sub .lit { margin-right: 5px; }
.st-end { border-top: 1px solid #999; }
.stack-tools { display: flex; align-items: center; height: 20px; margin-top: 9px; padding-left: 7px; }
.stack-tools .nudge3 { margin-left: 3px; }
.stack-tools .nudge8 { margin-left: 8px; }
.stack-tools .sep { height: 16px; margin: 0 8px; }
.divider { position: relative; height: 1px; margin: 18px 5px 0 5px; background: #5a5a5a; width: 178px; }
.divider i { width: 12px; height: 4px; margin: -3px auto 0; background: repeating-linear-gradient(90deg, #999 0 1px, transparent 1px 2px); }

.roll { background: #4b4b4b; border-radius: 3px; color: #ddd; }
.roll-h { height: 19px; display: flex; align-items: center; padding: 1px 0 0 6px; }
.roll-h b { margin-left: 6px; color: #e2e2e2; overflow: hidden; }
.dots { margin-left: auto; margin-right: 7px; width: 7px; height: 7px; flex: none; background: radial-gradient(circle, #888 0 .7px, transparent .8px) 0 0 / 2.400px 2.400px; }
.sel-roll { width: 179px; margin-top: 11px; height: 185px; overflow: hidden; }
.sub-icons { display: flex; margin: 4px 0 0 26px; height: 20px; }
.so { width: 24px; height: 20px; display: flex; align-items: center; justify-content: center; border-radius: 2px; }
.so.on { background: #5b88c4; }
.ck { display: flex; align-items: center; }
.box { width: 10px; height: 10px; background: #5a5a5a; margin-right: 3px; position: relative; flex: none; }
.box.on::after { content: ""; position: absolute; left: 2px; top: 2px; width: 6px; height: 3px; border-left: 1.500px solid #eee; border-bottom: 1.500px solid #eee; transform: rotate(-45deg); }
.sel-roll .ck { padding-left: 18px; }
.r1 { height: 20px; margin-top: 6px; }
.r2 { height: 19px; }
.dim-t { color: #7d7d7d; }
.spin { width: 57px; height: 14px; background: #5c5c5c; color: #cfcfcf; display: flex; align-items: center; justify-content: space-between; padding: 0 4px; margin-left: 5px; line-height: 14px; flex: none; }
.spin.off { background: #555; color: #767676; }
.sp-angle { width: 79px; margin-left: 8px; color: #7d7d7d; height: 15px; }
.updn { width: 6px; height: 9px; background: #ccc; clip-path: polygon(50% 0, 100% 40%, 0 40%, 0 60%, 100% 60%, 50% 100%, 0 60%, 0 40%); }
.updn-b { width: 10px; height: 16px; margin: 0 3px 0 5px; background: #5c5c5c; border-radius: 2px; display: flex; align-items: center; justify-content: center; }
.updn-b::before { content: ""; width: 6px; height: 9px; background: #ccc; clip-path: polygon(50% 0, 100% 40%, 0 40%, 0 60%, 100% 60%, 50% 100%, 0 60%, 0 40%); }
.btn-row { display: flex; padding-left: 17px; }
.mt3 { margin-top: 2px; gap: 8px; }
.mt6 { margin-top: 6px; }
.btn { display: block; height: 16px; line-height: 16px; text-align: center; background: #5c5c5c; border-radius: 2px; color: #bbb; flex: none; }
.w70 { width: 70px; }
.w55 { width: 55px; }
.w57 { width: 57px; margin-left: 5px; }
.grp { margin: 0; padding: 0; border: 1px solid #2f2f2f; border-radius: 2px; min-width: 0; }
.grp legend { padding: 0 3px; margin-left: 1px; line-height: 14px; color: #d6d6d6; }
.prev { margin: 5px 0 0 8px; width: 159px; height: 60px; }
.radios { display: flex; align-items: center; height: 20px; padding: 1px 0 0 3px; }
.rad { width: 10px; height: 10px; border-radius: 50%; background: #5a5a5a; margin-right: 8px; flex: none; }
.rad.on { background: radial-gradient(circle at 50% 50%, #eee 0 3px, #666 5px); }
.radios span { margin-right: 13px; }
.radios .so2 { margin-right: 9px; }
.radios .rad { margin-right: 7px; }

.cmd-right { width: 179px; padding-top: 39px; margin-left: 2px; display: flex; flex-direction: column; gap: 3px; flex: none; overflow: hidden; }
.r-h { height: 19px; flex: none; }
.r-h b { width: 144px; }
.r-s { height: 384px; flex: none; }
.rs-body { padding-top: 6px; }
.rs-body > .ck { padding-left: 20px; }
.h20 { height: 20px; }
.h18 { height: 18px; padding-left: 5px; }
.first { margin-top: 2px; }
.cage { width: 15px; height: 14px; border: 1px solid #111; }
.cage.y { background: #ffc30a; margin-left: 6px; }
.cage.g { background: #e2e49a; margin-left: 7px; }
.rs-body .grp { width: 150px; margin-left: 14px; }
.g55 { height: 55px; margin-top: -1px; }
.g56 { height: 56px; }
.g54 { height: 54px; margin-top: 1px; }
.g95 { height: 95px; margin-top: 1px; }
.sp-row { display: flex; align-items: center; justify-content: flex-end; height: 14px; padding-right: 4px; }
.gap7 { margin-top: 7px; }
.gap6 { margin-top: 6px; }
.box.lead { margin: 0 auto 0 4px; }
.rd { display: flex; align-items: center; height: 16px; padding-left: 6px; }
.rd .rad { margin-right: 8px; }
.update { width: 94px; height: 18px; line-height: 18px; margin: 6px 0 0 26px; color: #a8a8a8; }
.cmd-scroll { width: 3px; margin-left: 4px; padding-top: 35px; flex: none; }
.cmd-scroll i { height: 180px; background: #606060; }

.slider { height: 26px; flex: none; display: flex; align-items: center; background: #444; border-bottom: 1px solid #1c1c1c; }
.sl-btn { width: 14px; height: 16px; line-height: 16px; text-align: center; background: #5c5c5c; border-radius: 2px; color: #bbb; flex: none; }
.sl-track { width: 122px; height: 16px; line-height: 16px; margin: 0 3px 0 2px; text-align: center; background: #5c5c5c; border-radius: 3px; color: #c2c2c2; flex: none; }

.track { height: 26px; flex: none; display: flex; background: #444; }
.curve { width: 16px; height: 12px; margin: 7px 0 0 23px; }
.ruler { position: relative; width: 1256px; margin-left: 21px; background-color: #2e2e2e; background-image: linear-gradient(90deg, #909090 1px, transparent 1px), linear-gradient(90deg, #6f6f6f 1px, transparent 1px); background-size: 62.250px 17px, 12.450px 11px; background-position: 5px 2px, 5px 2px; background-repeat: repeat-x; }
.marker { position: absolute; left: 2px; top: 2px; width: 8px; height: 23px; background: #7f7a2c; }
.labels { position: relative; display: flex; margin-left: -26.100px; padding-top: 11px; color: #a4a4a4; }
.labels span { width: 62.250px; flex: none; text-align: center; line-height: 16px; }

.bottom { flex: 1; display: flex; background: #444; }
.mini { width: 97px; margin: 6px 0 0 5px; flex: none; }
.mini-a { height: 21px; background: #dcc4c4; border: 2px solid #f4f4f4; }
.mini-b { height: 21px; margin-top: 2px; background: #fff; border: 2px solid #f0f0f0; color: #a0a0a0; font: 12.500px/17px "Liberation Mono", monospace; overflow: hidden; padding-left: 2px; }
.vsep { width: 1px; height: 50px; margin: 3px 0 0 5px; background: #111; }
.status { width: 353px; margin: 11px 0 0 5px; color: #e0e0e0; flex: none; }
.coords { width: 446px; flex: none; }
.co-row { display: flex; align-items: center; height: 17px; margin-top: 9px; color: #ddd; }
.co-i { width: 16px; height: 16px; margin-left: 3px; }
.co-i.ml6 { margin-left: 12px; }
.co-i.ml5 { margin-left: 11px; }
.axis { font-weight: normal; width: 14px; flex: none; }
.a-x { margin-left: 7px; }
.a-y { margin-left: 14px; width: 13px; }
.a-z { margin-left: 14px; width: 13px; }
.co-f { width: 57px; height: 17px; line-height: 17px; padding-left: 3px; background: #555; color: #777; flex: none; }
.grid-t { margin-left: 15px; }
.tag-row { display: flex; align-items: center; margin: 6px 0 0 307px; gap: 6px; color: #cfcfcf; height: 20px; }
.tag-i { width: 22px; height: 20px; background: #5b88c4; border-radius: 2px; display: flex; align-items: center; justify-content: center; border-left: 1px solid #111; }
.play { width: 122px; padding-top: 8px; flex: none; }
.pl-row { display: flex; align-items: center; height: 19px; }
.pl-row.second { height: 18px; margin-top: 5px; }
.pl { width: 16px; height: 12px; margin: 0 2px; }
.pl.big { width: 18px; height: 18px; margin: 0 1px 0 3px; }
.pl.tall { height: 16px; }
.vs { width: 1px; height: 15px; background: #111; }
.pl.ml3 { margin-left: 5px; }
.vs.ml3 { margin-left: 3px; }
.vs.ml4 { margin-left: 4px; }
.pl.ml2 { margin-left: 4px; }
.frame { width: 67px; height: 16px; margin-left: 2px; }
.keys { display: flex; gap: 5px; padding-top: 7px; flex: none; margin-left: 9px; }
.bigkey { width: 42px; height: 42px; background: #5c5c5c; border-radius: 2px; display: flex; align-items: center; justify-content: center; }
.bk { width: 30px; height: 30px; }
.key-col { display: flex; flex-direction: column; gap: 3px; }
.key-row { display: flex; align-items: center; height: 20px; }
.kb { width: 46px; height: 20px; line-height: 20px; color: #b8b8b8; }
.kdd { width: 114px; height: 19px; margin-left: 5px; }
.kf { position: relative; width: 26px; height: 20px; margin-left: 5px; display: flex; align-items: center; justify-content: center; }
.kfb { width: 88px; height: 20px; line-height: 20px; color: #c2c2c2; }
.nav { display: grid; grid-template-columns: repeat(4, 23.500px); grid-auto-rows: 23px; margin: 5px 0 0 9px; flex: none; }
.nv { position: relative; display: flex; align-items: center; justify-content: center; }
```
